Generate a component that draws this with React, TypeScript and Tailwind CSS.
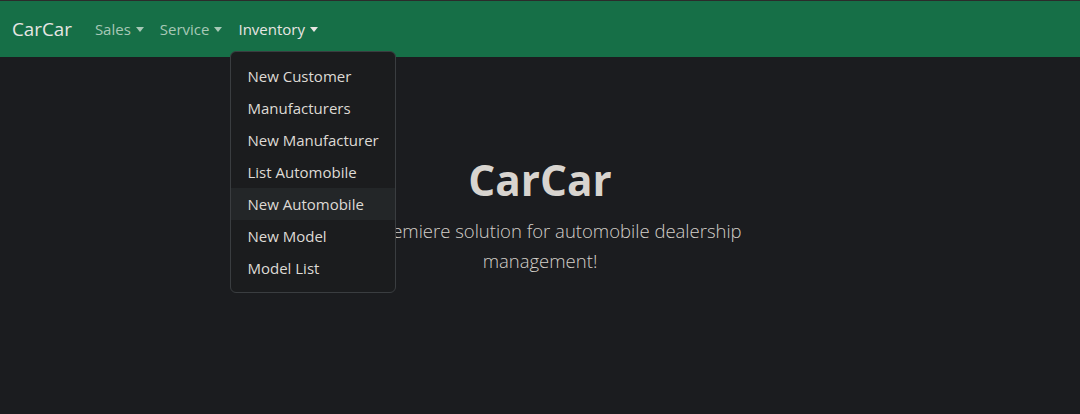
import { useState } from 'react';

const items = [
  'New Customer',
  'Manufacturers',
  'New Manufacturer',
  'List Automobile',
  'New Automobile',
  'New Model',
  'Model List',
];

function Caret() {
  return (
    <span className="ml-[5px] inline-block h-0 w-0 border-x-[4.5px] border-t-[5px] border-x-transparent border-t-current align-[3px]" />
  );
}

export default function App() {
  const [hover] = useState('New Automobile');

  return (
    <div className="min-h-[414px] bg-[#1b1c1f] font-['Open_Sans',sans-serif] text-[#e8e6e3]">
      <nav className="flex h-[57px] items-center border-t border-[#2b2b2b] bg-[#166f47] px-3">
        <a className="mr-[15px] text-[18.8px] leading-[30px] text-[#e8e6e3]">CarCar</a>
        <ul className="flex items-center text-[15px] leading-6">
          <li className="px-2 text-[#a7c8b6]">
            Sales
            <Caret />
          </li>
          <li className="px-2 text-[#a7c8b6]">
            Service
            <Caret />
          </li>
          <li className="relative px-2 text-[#e8e6e3]">
            Inventory
            <Caret />
            <div className="absolute left-0 top-[34px] z-10 min-w-[160px] whitespace-nowrap rounded-md border border-[#3a3d40] bg-[#1b1c1e] py-2">
              {items.map((it) => (
                <div
                  key={it}
                  className={
                    'px-4 py-1 leading-6 text-[#dedad5] ' +
                    (it === hover ? 'bg-[#232628]' : '')
                  }
                >
                  {it}
                </div>
              ))}
            </div>
          </li>
        </ul>
      </nav>

      <main className="my-12 px-6 py-12 text-center">
        <h1 className="mb-2 text-[42.3px] font-bold leading-[54.6px] text-[#d8d4cf]">CarCar</h1>
        <div className="mx-auto w-[456px]">
          <p className="mb-6 text-[18.5px] font-light leading-[30px] text-[#d3cfc9]">
            The premiere solution for automobile dealership management!
          </p>
        </div>
      </main>
    </div>
  );
}
